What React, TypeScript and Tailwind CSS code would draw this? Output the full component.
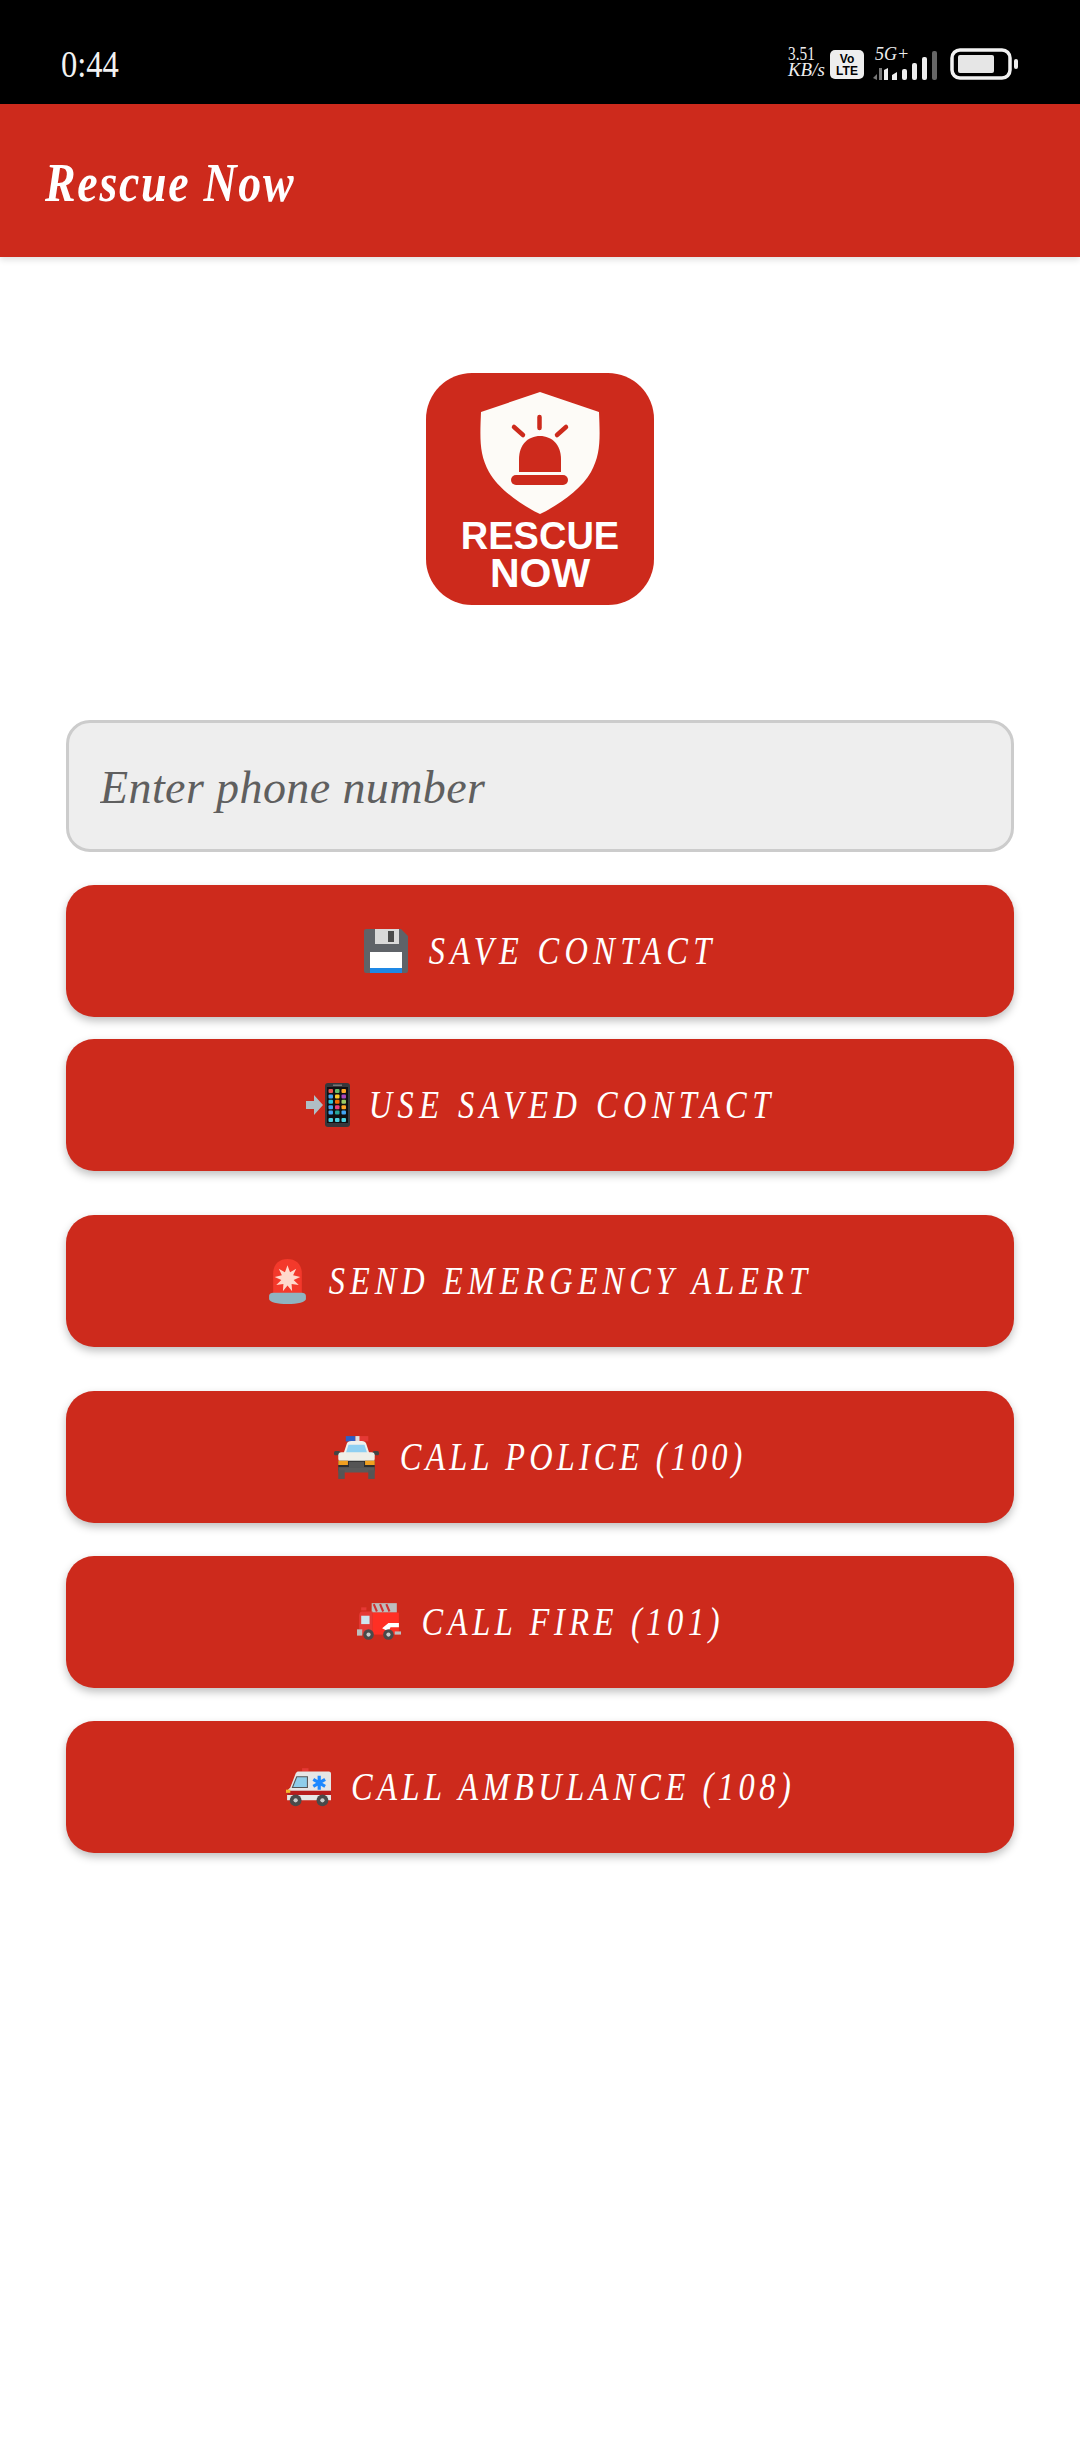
import type { ReactNode } from 'react';

const serif = "font-['Liberation_Serif',serif]";

function Floppy() {
  return (
    <svg width="44" height="44" viewBox="0 0 44 44" className="shrink-0">
      <path d="M2 0h35l7 7v35a2 2 0 0 1-2 2H2a2 2 0 0 1-2-2V2a2 2 0 0 1 2-2z" fill="#5f6368" />
      <rect x="11" y="0" width="24" height="15" fill="#d9d9d9" />
      <rect x="24" y="2" width="6" height="11" fill="#4a4a4a" />
      <rect x="6" y="23" width="32" height="21" fill="#ffffff" />
      <rect x="6" y="39" width="32" height="5" fill="#1e88e5" />
    </svg>
  );
}

function PhoneArrow() {
  const dots = ['#ef5350', '#66bb6a', '#ffa726', '#42a5f5', '#ffca28', '#ab47bc', '#26c6da', '#ef6c00', '#9ccc65', '#42a5f5', '#ec407a', '#ffa726', '#42a5f5', '#26a69a', '#42a5f5', '#4dd0e1', '#4dd0e1', '#4dd0e1'];
  return (
    <svg width="44" height="44" viewBox="0 0 44 44" className="shrink-0">
      <path d="M0 18h8v-6l9 10-9 10v-6H0z" fill="#b0bec5" />
      <rect x="19" y="0" width="25" height="44" rx="3" fill="#37373b" />
      <rect x="21" y="4" width="21" height="36" fill="#101012" />
      <rect x="27" y="1.5" width="9" height="1.5" fill="#777" />
      {dots.map((c, i) => (
        <rect key={i} x={22.5 + (i % 3) * 6.5} y={6 + Math.floor(i / 3) * 5.4 + (i >= 15 ? 2 : 0)} width="4.5" height="4" rx="1" fill={c} />
      ))}
    </svg>
  );
}

function Siren() {
  return (
    <svg width="39" height="45" viewBox="0 0 38 44" className="shrink-0">
      <path d="M5 35V14C5 5 11 0 19 0s14 5 14 14v21z" fill="#f4392b" />
      <path d="M19 6l2.500 7 6-3.500-3 6.500 7 1.500-6.500 3 5 5-7-1 .5 7-4.500-5.500-4.500 5.500.5-7-7 1 5-5-6.500-3 7-1.500-3-6.500 6 3.500z" fill="#ffd9cc" />
      <path d="M1 36c0-2 2-3 4-3h28c2 0 4 1 4 3v3c0 3-8 5-18 5S1 42 1 39z" fill="#8fb3c0" />
    </svg>
  );
}

function PoliceCar() {
  return (
    <svg width="45" height="43" viewBox="0 0 42 40" className="shrink-0">
      <rect x="11" y="0" width="9" height="5" fill="#2f5fc4" />
      <rect x="20" y="0" width="4" height="5" fill="#e0e0e0" />
      <rect x="24" y="0" width="8" height="5" fill="#e53935" />
      <path d="M9 16l3-9c.500-1.500 2-2.500 4-2.500h10c2 0 3.500 1 4 2.500l3 9z" fill="#f1f1ec" />
      <path d="M11 16l2.500-8h15l2.500 8z" fill="#8fd0f2" />
      <rect x="0" y="14" width="6" height="4" rx="1.500" fill="#444" />
      <rect x="36" y="14" width="6" height="4" rx="1.500" fill="#444" />
      <rect x="4" y="15" width="34" height="9" rx="3" fill="#efefe8" />
      <rect x="4" y="23" width="34" height="10" rx="1" fill="#2e2e2e" />
      <rect x="4" y="23" width="9" height="4" fill="#f0a020" />
      <rect x="29" y="23" width="9" height="4" fill="#f0a020" />
      <rect x="14" y="24" width="14" height="5" fill="#555" />
      <rect x="4" y="29" width="34" height="5" fill="#5a5a5a" />
      <rect x="4" y="32" width="6" height="8" fill="#555" />
      <rect x="32" y="32" width="6" height="8" fill="#555" />
    </svg>
  );
}

function FireTruck() {
  return (
    <svg width="44" height="38" viewBox="0 0 42 36" className="shrink-0">
      <rect x="14" y="0" width="24" height="9" fill="#bdbdbd" />
      <path d="M16 1l3 7M22 1l3 7M28 1l3 7" stroke="#d32f2f" strokeWidth="2" />
      <rect x="4" y="4" width="5" height="3" fill="#e53935" />
      <path d="M2 12c0-2 1-4 3-4h10v22H2z" fill="#e53935" />
      <rect x="4" y="12" width="8" height="8" fill="#cfe4ef" />
      <rect x="15" y="9" width="25" height="21" fill="#ff2f24" />
      <path d="M24 24l6-5h10v4h-8l-2 4z" fill="#ffffff" />
      <rect x="0" y="25" width="5" height="6" fill="#bdbdbd" />
      <rect x="36" y="27" width="6" height="3" fill="#bdbdbd" />
      <circle cx="11" cy="30" r="5" fill="#4a4a4a" />
      <circle cx="11" cy="30" r="2" fill="#ccc" />
      <circle cx="30" cy="30" r="5" fill="#4a4a4a" />
      <circle cx="30" cy="30" r="2" fill="#ccc" />
    </svg>
  );
}

function Ambulance() {
  return (
    <svg width="45" height="39" viewBox="0 0 42 36" className="shrink-0">
      <rect x="15" y="0" width="6" height="3" fill="#e53935" />
      <path d="M12 3h28a2 2 0 0 1 2 2v25H1v-9l3-3 5-13c.600-1.500 1.500-2 3-2z" fill="#e6e6e6" />
      <path d="M6 18l4-10h10v10z" fill="#8ecdea" stroke="#555" strokeWidth="1" />
      <rect x="1" y="21" width="41" height="4" fill="#b71c1c" />
      <path d="M31 7v13M25.500 10.500l11 6.500M36.500 10.500l-11 6.500" stroke="#1e88ff" strokeWidth="3" />
      <rect x="0" y="20" width="4" height="3" fill="#f5b82e" />
      <circle cx="9" cy="30" r="5.500" fill="#4a4a4a" />
      <circle cx="9" cy="30" r="2" fill="#ccc" />
      <circle cx="34" cy="30" r="5.500" fill="#4a4a4a" />
      <circle cx="34" cy="30" r="2" fill="#ccc" />
    </svg>
  );
}

function StatusBar() {
  return (
    <div className="h-[104px] bg-black flex items-start justify-between pl-[61px] pr-[60px] text-white">
      <span className={`${serif} mt-[45px] text-[37px] leading-[40px] origin-left scale-x-[0.88] text-[#f2f2f2]`}>0:44</span>
      <div className="flex items-start mt-[46px]">
        <div className={`${serif} w-[40px] text-[#eeeeee] text-[18px] leading-[16px]`}>
          <div className="origin-left scale-x-[0.85]">3.51</div>
          <div className="italic origin-left scale-x-[1.05] whitespace-nowrap">KB/s</div>
        </div>
        <div className="ml-[2px] mt-[4px] w-[34px] h-[29px] rounded-[5px] bg-[#eeeeee] text-black font-['Liberation_Sans',sans-serif] font-bold text-[12px] leading-[12px] text-center pt-[3px]">
          <div>Vo</div>
          <div>LTE</div>
        </div>
        <div className="ml-[9px] w-[64px] relative h-[34px]">
          <span className={`${serif} absolute left-[2px] top-0 text-[18px] leading-[16px] italic text-[#eeeeee]`}>5G+</span>
          <svg width="64" height="30" viewBox="0 0 64 30" className="absolute left-0 top-[4px]">
            <path d="M0 28l4-4v6zM6 18h3v12H6z" fill="#777" />
            <path d="M11 20l4-2v12h-4zM19 25l5-3v8h-5z" fill="#eeeeee" />
            <rect x="29" y="19" width="5" height="11" rx="2" fill="#eeeeee" />
            <rect x="39" y="13" width="5" height="17" rx="2" fill="#eeeeee" />
            <rect x="49" y="7" width="5" height="23" rx="2" fill="#eeeeee" />
            <rect x="59" y="1" width="5" height="29" rx="2" fill="#666" />
          </svg>
        </div>
        <svg width="70" height="32" viewBox="0 0 70 32" className="ml-[13px] mt-[2px]">
          <rect x="2" y="2" width="58" height="28" rx="8" fill="none" stroke="#f2f2f2" strokeWidth="3.500" />
          <rect x="8" y="7" width="36" height="18" rx="2" fill="#e6e6e6" />
          <rect x="64" y="11" width="4" height="10" rx="2" fill="#eeeeee" />
        </svg>
      </div>
    </div>
  );
}

function Logo() {
  return (
    <div className="mx-auto mt-[116px] w-[228px] h-[232px] rounded-[46px] bg-[#cd2a1c] flex flex-col items-center pt-[19px] font-['Liberation_Sans',sans-serif] font-bold text-white">
      <svg width="122" height="122" viewBox="0 0 122 122" className="shrink-0">
        <path d="M61 0l59 20c1 26 2 42-8 60-9 16-30 32-51 42C40 112 19 96 10 80 0 62 1 46 2 20z" fill="#fdfbf7" />
        <path d="M60.500 25v11M35 35l9 8M87 35l-9 8" stroke="#cd2a1c" strokeWidth="4.500" strokeLinecap="round" fill="none" />
        <path d="M40 80V67c0-14 9-23 21-23s21 9 21 23v13z" fill="#cd2a1c" />
        <rect x="32" y="83" width="57" height="10" rx="5" fill="#cd2a1c" />
      </svg>
      <div className="text-[38px] leading-[37px] mt-[4px]">RESCUE</div>
      <div className="text-[41px] leading-[36px]">NOW</div>
    </div>
  );
}

function ActionButton({ icon, label, width, tracking, className }: { icon: ReactNode; label: string; width: string; tracking: string; className: string }) {
  return (
    <button className={`w-full h-[132px] rounded-[28px] bg-[#cd2a1c] shadow-[0_4px_8px_rgba(0,0,0,0.25)] flex items-center justify-center gap-[21px] ${className}`}>
      {icon}
      <span className={`flex justify-center ${width}`}>
        <span className={`${serif} italic text-white text-[40px] leading-[44px] whitespace-nowrap scale-x-[0.81] shrink-0 ${tracking}`}>{label}</span>
      </span>
    </button>
  );
}

export default function App() {
  return (
    <div className="min-h-[2460px] bg-white">
      <StatusBar />
      <header className="h-[153px] bg-[#cd2a1c] shadow-[0_3px_6px_rgba(0,0,0,0.12)] flex items-center pl-[45px] pt-[4px]">
        <h1 className={`${serif} italic font-bold text-white text-[54px] leading-[60px] tracking-[2px] origin-left scale-x-[0.85] whitespace-nowrap`}>Rescue Now</h1>
      </header>
      <main className="px-[66px]">
        <Logo />
        <input
          type="text"
          placeholder="Enter phone number"
          className={`${serif} italic mt-[115px] w-full h-[132px] rounded-[24px] bg-[#eeeeee] border-[3px] border-[#cccccc] px-[31px] pt-[2px] text-[46px] tracking-[0.4px] text-[#5f5f5f] placeholder:text-[#5f5f5f] outline-none`}
        />
        <ActionButton icon={<Floppy />} label="SAVE CONTACT" width="w-[287px]" tracking="tracking-[6.6px]" className="mt-[33px]" />
        <ActionButton icon={<PhoneArrow />} label="USE SAVED CONTACT" width="w-[404px]" tracking="tracking-[6.7px]" className="mt-[22px]" />
        <ActionButton icon={<Siren />} label="SEND EMERGENCY ALERT" width="w-[484px]" tracking="tracking-[6.2px]" className="mt-[44px]" />
        <ActionButton icon={<PoliceCar />} label="CALL POLICE (100)" width="w-[346px]" tracking="tracking-[5.1px]" className="mt-[44px]" />
        <ActionButton icon={<FireTruck />} label="CALL FIRE (101)" width="w-[302px]" tracking="tracking-[5.7px]" className="mt-[33px]" />
        <ActionButton icon={<Ambulance />} label="CALL AMBULANCE (108)" width="w-[443px]" tracking="tracking-[5.6px]" className="mt-[33px]" />
      </main>
    </div>
  );
}
